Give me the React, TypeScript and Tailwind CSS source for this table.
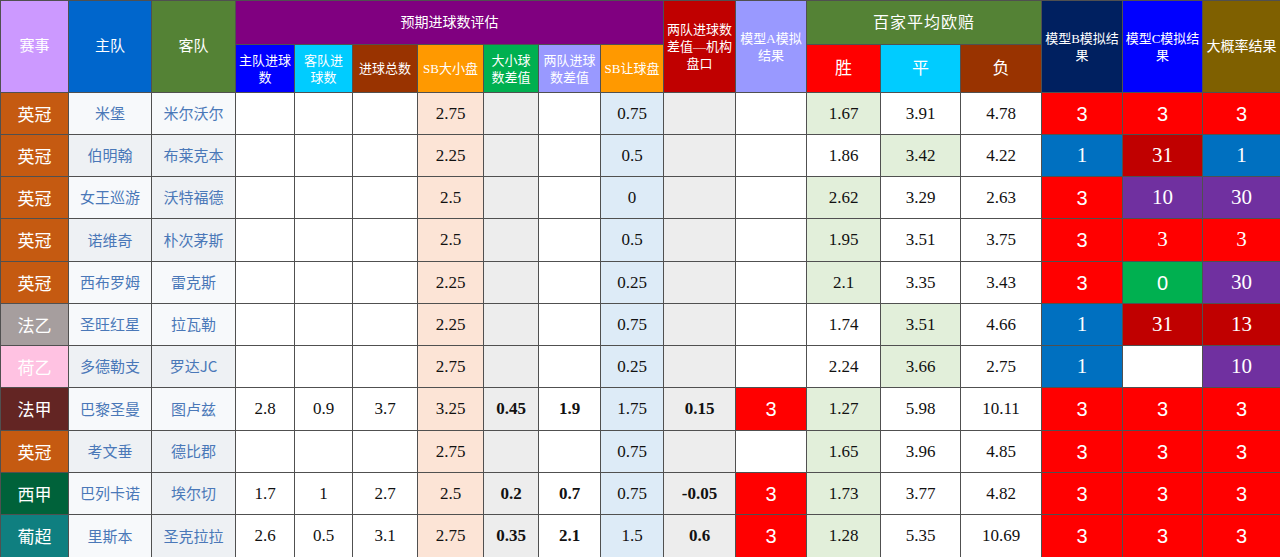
import React from 'react';

type Cell = {
  v?: string;
  bg?: string;
  bold?: boolean;
  sans?: boolean;
};

const cjk = "font-['Noto_Sans_CJK_SC',sans-serif]";
const serif = "font-['Liberation_Serif','Noto_Sans_CJK_SC',serif]";

const widths = [68, 83, 84, 59, 58, 65, 66, 55, 62, 63, 72, 71, 74, 80, 81, 81, 80, 78];
const rowHeights = ['h-[42px]', 'h-[42px]', 'h-[42px]', 'h-[43px]', 'h-[42px]', 'h-[42px]', 'h-[42px]', 'h-[43px]', 'h-[42px]', 'h-[42px]', 'h-[43px]'];

const leagueBg: Record<string, string> = {
  英冠: 'bg-[#c55a11]',
  法乙: 'bg-[#a69e9e]',
  荷乙: 'bg-[#ffc2e2]',
  法甲: 'bg-[#632523]',
  西甲: 'bg-[#00623a]',
  葡超: 'bg-[#0f7f80]',
};

const R = 'bg-[#ff0000]';
const B = 'bg-[#0070c0]';
const DR = 'bg-[#c00000]';
const P = 'bg-[#7030a0]';
const G = 'bg-[#00b050]';
const W = 'bg-white';

type Row = {
  league: string;
  home: string;
  away: string;
  homeGray: boolean;
  awayGray: boolean;
  hg?: string;
  ag?: string;
  total?: string;
  ou: string;
  ouDiff?: string;
  goalDiff?: string;
  ah: string;
  inst?: string;
  modelA?: string;
  win: string;
  draw: string;
  lose: string;
  fav: 'win' | 'draw';
  b: Cell;
  c: Cell;
  p: Cell;
};

const rows: Row[] = [
  { league: '英冠', home: '米堡', away: '米尔沃尔', homeGray: false, awayGray: false, ou: '2.75', ah: '0.75', win: '1.67', draw: '3.91', lose: '4.78', fav: 'win', b: { v: '3', bg: R, sans: true }, c: { v: '3', bg: R, sans: true }, p: { v: '3', bg: R, sans: true } },
  { league: '英冠', home: '伯明翰', away: '布莱克本', homeGray: true, awayGray: true, ou: '2.25', ah: '0.5', win: '1.86', draw: '3.42', lose: '4.22', fav: 'draw', b: { v: '1', bg: B }, c: { v: '31', bg: DR }, p: { v: '1', bg: B } },
  { league: '英冠', home: '女王巡游', away: '沃特福德', homeGray: false, awayGray: true, ou: '2.5', ah: '0', win: '2.62', draw: '3.29', lose: '2.63', fav: 'win', b: { v: '3', bg: R, sans: true }, c: { v: '10', bg: P }, p: { v: '30', bg: P } },
  { league: '英冠', home: '诺维奇', away: '朴次茅斯', homeGray: true, awayGray: true, ou: '2.5', ah: '0.5', win: '1.95', draw: '3.51', lose: '3.75', fav: 'win', b: { v: '3', bg: R, sans: true }, c: { v: '3', bg: R }, p: { v: '3', bg: R } },
  { league: '英冠', home: '西布罗姆', away: '雷克斯', homeGray: false, awayGray: false, ou: '2.25', ah: '0.25', win: '2.1', draw: '3.35', lose: '3.43', fav: 'win', b: { v: '3', bg: R, sans: true }, c: { v: '0', bg: G, sans: true }, p: { v: '30', bg: P } },
  { league: '法乙', home: '圣旺红星', away: '拉瓦勒', homeGray: false, awayGray: false, ou: '2.25', ah: '0.75', win: '1.74', draw: '3.51', lose: '4.66', fav: 'draw', b: { v: '1', bg: B }, c: { v: '31', bg: DR }, p: { v: '13', bg: DR } },
  { league: '荷乙', home: '多德勒支', away: '罗达JC', homeGray: true, awayGray: true, ou: '2.75', ah: '0.25', win: '2.24', draw: '3.66', lose: '2.75', fav: 'draw', b: { v: '1', bg: B }, c: { bg: W }, p: { v: '10', bg: P } },
  { league: '法甲', home: '巴黎圣曼', away: '图卢兹', homeGray: false, awayGray: false, hg: '2.8', ag: '0.9', total: '3.7', ou: '3.25', ouDiff: '0.45', goalDiff: '1.9', ah: '1.75', inst: '0.15', modelA: '3', win: '1.27', draw: '5.98', lose: '10.11', fav: 'win', b: { v: '3', bg: R, sans: true }, c: { v: '3', bg: R, sans: true }, p: { v: '3', bg: R, sans: true } },
  { league: '英冠', home: '考文垂', away: '德比郡', homeGray: true, awayGray: true, ou: '2.75', ah: '0.75', win: '1.65', draw: '3.96', lose: '4.85', fav: 'win', b: { v: '3', bg: R, sans: true }, c: { v: '3', bg: R, sans: true }, p: { v: '3', bg: R, sans: true } },
  { league: '西甲', home: '巴列卡诺', away: '埃尔切', homeGray: false, awayGray: true, hg: '1.7', ag: '1', total: '2.7', ou: '2.5', ouDiff: '0.2', goalDiff: '0.7', ah: '0.75', inst: '-0.05', modelA: '3', win: '1.73', draw: '3.77', lose: '4.82', fav: 'win', b: { v: '3', bg: R, sans: true }, c: { v: '3', bg: R, sans: true }, p: { v: '3', bg: R, sans: true } },
  { league: '葡超', home: '里斯本', away: '圣克拉拉', homeGray: false, awayGray: true, hg: '2.6', ag: '0.5', total: '3.1', ou: '2.75', ouDiff: '0.35', goalDiff: '2.1', ah: '1.5', inst: '0.6', modelA: '3', win: '1.28', draw: '5.35', lose: '10.69', fav: 'win', b: { v: '3', bg: R, sans: true }, c: { v: '3', bg: R, sans: true }, p: { v: '3', bg: R, sans: true } },
];

const bd = 'border border-[#505050]';

const Head = ({ children, bg, rowSpan, colSpan, size = 'text-[13px]' }: { children: React.ReactNode; bg: string; rowSpan?: number; colSpan?: number; size?: string }) => (
  <th rowSpan={rowSpan} colSpan={colSpan} className={`${bd} ${bg} ${size} ${serif} font-normal text-white leading-[17px] text-center align-middle whitespace-nowrap p-0`}>
    {children}
  </th>
);

const Num = ({ v, bg = 'bg-white', bold }: { v?: string; bg?: string; bold?: boolean }) => (
  <td className={`${bd} ${bg} ${serif} text-[17px] text-[#111] text-center align-middle p-0 ${bold ? 'font-bold' : ''}`}>{v}</td>
);

const Result = ({ c }: { c: Cell }) => (
  <td className={`${bd} ${c.bg} ${c.sans ? "font-['Liberation_Sans',sans-serif] text-[20px]" : `${serif} text-[21px]`} text-white text-center align-middle p-0`}>
    {c.v}
  </td>
);

export default function App() {
  return (
    <div className="w-[1280px] h-[557px] bg-white overflow-hidden">
      <table className="w-[1280px] table-fixed border-collapse">
        <colgroup>
          {widths.map((w, i) => (
            <col key={i} style={{ width: w }} />
          ))}
        </colgroup>
        <thead>
          <tr className="h-[44px]">
            <Head bg="bg-[#cc99ff]" rowSpan={2} size="text-[15px]">赛事</Head>
            <Head bg="bg-[#0066cc]" rowSpan={2} size="text-[15px]">主队</Head>
            <Head bg="bg-[#548235]" rowSpan={2} size="text-[15px]">客队</Head>
            <Head bg="bg-[#800080]" colSpan={7} size="text-[14px]">预期进球数评估</Head>
            <Head bg="bg-[#c00000]" rowSpan={2}>
              两队进球数<br />差值—机构<br />盘口
            </Head>
            <Head bg="bg-[#9999ff]" rowSpan={2}>
              模型A模拟<br />结果
            </Head>
            <Head bg="bg-[#548235]" colSpan={3} size="text-[16px]">
              <span className="tracking-[1px]">百家平均欧赔</span>
            </Head>
            <Head bg="bg-[#002060]" rowSpan={2}>
              模型B模拟结<br />果
            </Head>
            <Head bg="bg-[#0000ff]" rowSpan={2}>
              模型C模拟结<br />果
            </Head>
            <Head bg="bg-[#7f6000]" rowSpan={2} size="text-[14px]">大概率结果</Head>
          </tr>
          <tr className="h-[48px]">
            <Head bg="bg-[#0000ff]">主队进球<br />数</Head>
            <Head bg="bg-[#00ccff]">客队进<br />球数</Head>
            <Head bg="bg-[#993300]">进球总数</Head>
            <Head bg="bg-[#ff9900]">SB大小盘</Head>
            <Head bg="bg-[#00b050]">大小球<br />数差值</Head>
            <Head bg="bg-[#9999ff]">两队进球<br />数差值</Head>
            <Head bg="bg-[#ff9900]">SB让球盘</Head>
            <Head bg="bg-[#ff0000]" size="text-[17px]">胜</Head>
            <Head bg="bg-[#00ccff]" size="text-[17px]">平</Head>
            <Head bg="bg-[#993300]" size="text-[17px]">负</Head>
          </tr>
        </thead>
        <tbody>
          {rows.map((r, i) => (
            <tr key={i} className={rowHeights[i]}>
              <td className={`${bd} ${leagueBg[r.league]} ${cjk} text-[17px] text-white text-center align-middle p-0`}>{r.league}</td>
              <td className={`${bd} ${r.homeGray ? 'bg-[#eef1f4]' : 'bg-[#f7f9fb]'} ${cjk} text-[15px] text-[#4a78b8] text-center align-middle p-0`}>{r.home}</td>
              <td className={`${bd} ${r.awayGray ? 'bg-[#eef1f4]' : 'bg-[#f7f9fb]'} ${cjk} text-[15px] text-[#4a78b8] text-center align-middle p-0`}>{r.away}</td>
              <Num v={r.hg} />
              <Num v={r.ag} />
              <Num v={r.total} />
              <Num v={r.ou} bg="bg-[#fce4d6]" />
              <Num v={r.ouDiff} bg="bg-[#ededed]" bold />
              <Num v={r.goalDiff} bold />
              <Num v={r.ah} bg="bg-[#ddebf7]" />
              <Num v={r.inst} bg="bg-[#ededed]" bold />
              <td className={`${bd} ${r.modelA ? 'bg-[#ff0000]' : 'bg-white'} font-['Liberation_Sans',sans-serif] text-[20px] text-white text-center align-middle p-0`}>{r.modelA}</td>
              <Num v={r.win} bg={r.fav === 'win' ? 'bg-[#e2efda]' : 'bg-white'} />
              <Num v={r.draw} bg={r.fav === 'draw' ? 'bg-[#e2efda]' : 'bg-white'} />
              <Num v={r.lose} />
              <Result c={r.b} />
              <Result c={r.c} />
              <Result c={r.p} />
            </tr>
          ))}
        </tbody>
      </table>
    </div>
  );
}
